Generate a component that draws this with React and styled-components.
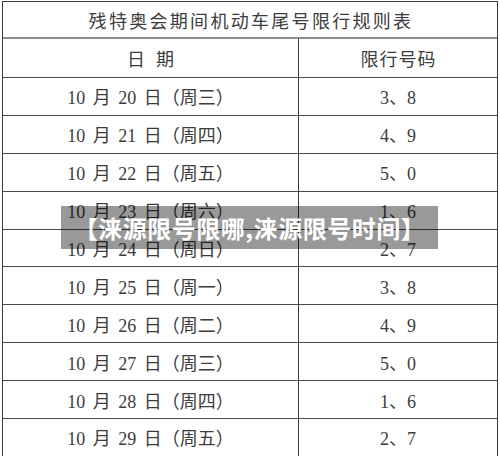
import React from "react";
import styled, { createGlobalStyle } from "styled-components";

const GlobalStyle = createGlobalStyle`
  html, body {
    margin: 0;
    padding: 0;
    background: #ffffff;
  }
`;

const rows = [
  ["10", "20", "三", "3、8"],
  ["10", "21", "四", "4、9"],
  ["10", "22", "五", "5、0"],
  ["10", "23", "六", "1、6"],
  ["10", "24", "日", "2、7"],
  ["10", "25", "一", "3、8"],
  ["10", "26", "二", "4、9"],
  ["10", "27", "三", "5、0"],
  ["10", "28", "四", "1、6"],
  ["10", "29", "五", "2、7"],
];

function App() {
  return (
    <Page>
      <GlobalStyle />
      <Table>
        <Title>残特奥会期间机动车尾号限行规则表</Title>
        <Cell $left $spacing={11}>日期</Cell>
        <Cell $spacing={1}>限行号码</Cell>
        {rows.map(([m, d, w, nums], i) => (
          <React.Fragment key={i}>
            <Cell $left>
              {m} 月 {d} 日（周{w}）
            </Cell>
            <Cell>{nums}</Cell>
          </React.Fragment>
        ))}
      </Table>
      <Banner>【涞源限号限哪,涞源限号时间】</Banner>
    </Page>
  );
}

const Page = styled.div`
  width: 500px;
  height: 456px;
  position: relative;
  overflow: hidden;
  box-sizing: border-box;
  padding: 1px 2px 0 2px;
  background: #ffffff;
`;

const Table = styled.div`
  display: grid;
  grid-template-columns: 296px 1fr;
  grid-template-rows: 37px 39px repeat(10, 37.9px);
  border: 1px solid #3a3a3a;
  border-bottom: none;
  box-sizing: border-box;
  height: 455px;
  font-family: "Liberation Serif", "Noto Sans CJK SC", serif;
  color: #3c3c3c;
`;

const Title = styled.div`
  grid-column: 1 / 3;
  display: flex;
  align-items: center;
  justify-content: center;
  font-size: 18px;
  letter-spacing: 2.3px;
  padding-left: 2px;
  border-bottom: 2px solid #8c8c8c;
`;

const Cell = styled.div`
  display: flex;
  align-items: center;
  justify-content: center;
  font-size: 18px;
  white-space: pre;
  word-spacing: 3px;
  letter-spacing: ${(p) => (p.$spacing ? `${p.$spacing}px` : "0")};
  padding-left: ${(p) => (p.$spacing ? `${p.$spacing}px` : "0")};
  border-bottom: 1.5px solid #4a4a4a;
  border-right: ${(p) => (p.$left ? "1.5px solid #3a3a3a" : "none")};
  box-sizing: border-box;
`;

const Banner = styled.div`
  position: absolute;
  left: 61px;
  top: 206px;
  width: 377px;
  height: 43px;
  background: rgba(0, 0, 0, 0.4);
  display: flex;
  align-items: center;
  justify-content: center;
  color: #ffffff;
  font-family: "Noto Sans CJK SC", "Noto Sans", sans-serif;
  font-weight: 700;
  font-size: 24px;
  letter-spacing: 0.5px;
  white-space: nowrap;
`;

export default App;
